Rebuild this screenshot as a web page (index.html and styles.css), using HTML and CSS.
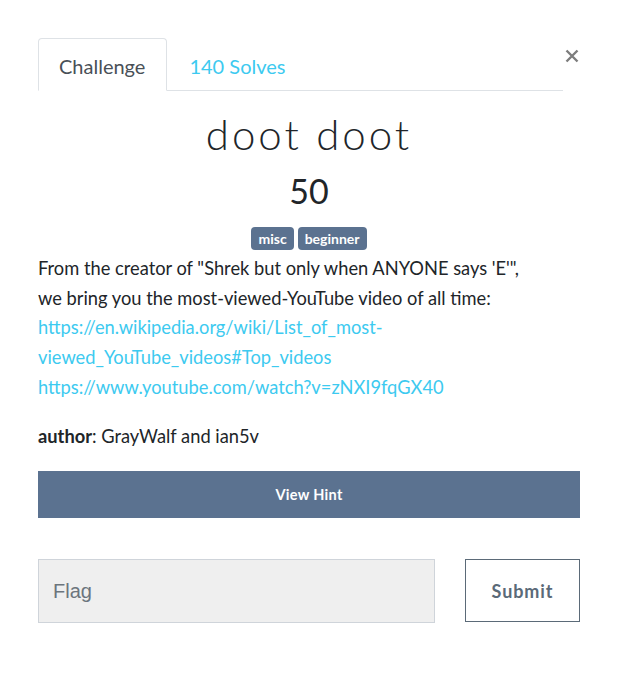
FILE: index.html
```html
<!DOCTYPE html>
<html>
<head>
<meta charset="utf-8">
<link rel="stylesheet" href="styles.css">
</head>
<body>
<div class="modal">
  <div class="header">
    <ul class="tabs">
      <li class="tab active">Challenge</li>
      <li class="tab link">140 Solves</li>
    </ul>
    <button class="close" aria-label="Close">
      <svg width="14" height="14" viewBox="0 0 14 14"><path d="M1.5 1.5 L12.5 12.5 M12.5 1.5 L1.5 12.5" stroke="#7d7d7d" stroke-width="2.4" stroke-linecap="butt"/></svg>
    </button>
  </div>
  <h2 class="title">doot doot</h2>
  <h3 class="value">50</h3>
  <div class="tags">
    <span class="tag">misc</span>
    <span class="tag">beginner</span>
  </div>
  <p class="desc">From the creator of "Shrek but only when ANYONE says 'E'",<br>we bring you the most-viewed-YouTube video of all time:<br><a href="#">https://en.wikipedia.org/wiki/List_of_most-viewed_YouTube_videos#Top_videos</a><br><a href="#">https://www.youtube.com/watch?v=zNXI9fqGX40</a></p>
  <p class="author"><b>author</b>: GrayWalf and ian5v</p>
  <button class="hint">View Hint</button>
  <div class="submit-row">
    <input class="flag" type="text" placeholder="Flag">
    <button class="submit">Submit</button>
  </div>
</div>
</body>
</html>
```

FILE: styles.css
```css
* { box-sizing: border-box; }
html, body { margin: 0; padding: 0; background: #fff; }
body { font-family: Lato, "Open Sans", sans-serif; color: #212529; }
.modal { width: 542px; margin: 38px 0 0 38px; }
.header { display: flex; align-items: flex-start; }
.tabs { flex: 1; display: flex; list-style: none; margin: 0; padding: 0; border-bottom: 1px solid #dee2e6; height: 53px; }
.tab { font-size: 20px; line-height: 24px; padding: 15px 21px 13px 20px; border: 1px solid transparent; border-radius: 4px 4px 0 0; margin-bottom: -1px; height: 53px; }
.tab.active { color: #495057; border-color: #dee2e6 #dee2e6 #fff; background: #fff; }
.tab.link { color: #3dcaf0; padding-left: 21px; }
.close { width: 17px; height: 17px; margin: 9px 0 0 0; padding: 0; border: 0; background: none; display: flex; align-items: center; justify-content: center; }
.title { margin: 19px 0 0; text-align: center; font-weight: 300; font-size: 42px; line-height: 48px; letter-spacing: 3px; color: #212529; }
.value { margin: 13px 0 0; text-align: center; font-weight: 400; font-size: 34px; line-height: 40px; color: #212529; }
.tags { display: flex; justify-content: center; gap: 4px; margin-top: 16px; }
.tag { background: #5b7290; color: #fff; font-weight: 700; font-size: 14px; line-height: 23px; height: 23px; padding: 0 7px; border-radius: 4px; }
.desc { margin: 4px 0 0; font-size: 18.3px; line-height: 29.7px; }
.desc a { color: #3dcaf0; text-decoration: none; }
.author { margin: 19px 0 0; font-size: 18.3px; line-height: 29.7px; }
.hint { display: block; width: 100%; margin-top: 20px; height: 47px; border: 0; background: #5b7290; color: #fff; font-family: Lato, sans-serif; font-weight: 700; font-size: 14.5px; letter-spacing: 0.3px; }
.submit-row { display: flex; justify-content: space-between; margin-top: 41px; }
.flag { width: 397px; height: 64px; background: #efefef; border: 1px solid #cfd4da; padding: 0 14px; font-family: "Liberation Sans", Arial, sans-serif; font-size: 20px; color: #495057; outline: none; }
.flag::placeholder { color: #6c757d; }
.submit { width: 115px; height: 63px; background: #fff; border: 1px solid #5b6a78; color: #5b6a78; font-family: Lato, sans-serif; font-weight: 700; font-size: 18px; letter-spacing: 0.9px; }
```
